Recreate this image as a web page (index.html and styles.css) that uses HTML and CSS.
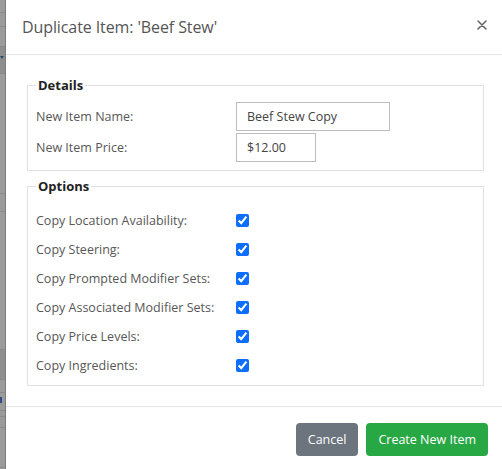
FILE: index.html
```html
<!DOCTYPE html>
<html lang="en">
<head>
<meta charset="utf-8">
<title>Duplicate Item</title>
<link rel="stylesheet" href="styles.css">
</head>
<body>
  <!-- dimmed page behind the dialog -->
  <div class="page">
    <div class="page-row h13"></div>
    <div class="page-row h14"></div>
    <div class="page-row h20"></div>
    <div class="page-row h27 dark"><span class="caret"></span></div>
    <div class="page-row h120"></div>
    <div class="page-row h18"></div>
    <div class="page-row h138"></div>
    <div class="page-row h30 dark"></div>
    <div class="page-row h13"></div>
    <div class="page-row h18"><span class="mark"></span></div>
    <div class="page-row h6"></div>
    <div class="page-row h11"></div>
    <div class="page-row h40"></div>
  </div>

  <div class="modal">
    <div class="modal-header">
      <h5 class="modal-title">Duplicate Item: 'Beef Stew'</h5>
      <button class="close" type="button" aria-label="Close">
        <svg width="10" height="10" viewBox="0 0 10 10"><path d="M1 1L9 9M9 1L1 9" stroke="#666" stroke-width="1.6" stroke-linecap="round"/></svg>
      </button>
    </div>

    <div class="modal-body">
      <fieldset class="group">
        <legend>Details</legend>
        <div class="grid details">
          <label class="lbl">New Item Name:</label>
          <input class="field name" type="text" value="Beef Stew Copy">
          <label class="lbl">New Item Price:</label>
          <input class="field price" type="text" value="$12.00">
        </div>
      </fieldset>

      <fieldset class="group options">
        <legend>Options</legend>
        <div class="grid checks">
          <label class="lbl">Copy Location Availability:</label>
          <input class="check" type="checkbox" checked>
          <label class="lbl">Copy Steering:</label>
          <input class="check" type="checkbox" checked>
          <label class="lbl">Copy Prompted Modifier Sets:</label>
          <input class="check" type="checkbox" checked>
          <label class="lbl">Copy Associated Modifier Sets:</label>
          <input class="check" type="checkbox" checked>
          <label class="lbl">Copy Price Levels:</label>
          <input class="check" type="checkbox" checked>
          <label class="lbl">Copy Ingredients:</label>
          <input class="check" type="checkbox" checked>
        </div>
      </fieldset>
    </div>

    <div class="modal-footer">
      <button class="btn btn-secondary" type="button">Cancel</button>
      <button class="btn btn-success" type="button">Create New Item</button>
    </div>
  </div>
</body>
</html>
```

FILE: styles.css
```css
* { box-sizing: border-box; }

html, body {
  margin: 0;
  height: 100%;
}

body {
  position: relative;
  overflow: hidden;
  background: #9b9b9b;
  font-family: "Open Sans", "Noto Sans", sans-serif;
  color: #555;
}

/* background table rows, dimmed by the backdrop */
.page {
  display: flex;
  flex-direction: column;
  width: 5px;
}
.page-row {
  position: relative;
  flex-shrink: 0;
  border-bottom: 1px solid #8a8a8a;
}
.page-row.dark { background: #8e8e8e; }
.h6 { height: 6px; }
.h11 { height: 11px; }
.h13 { height: 13px; }
.h14 { height: 14px; }
.h18 { height: 18px; }
.h20 { height: 20px; }
.h27 { height: 27px; }
.h30 { height: 30px; }
.h40 { height: 40px; }
.h120 { height: 120px; }
.h138 { height: 138px; }
.caret {
  position: absolute;
  left: 0;
  top: 9px;
  border-left: 2px solid transparent;
  border-right: 2px solid transparent;
  border-top: 3px solid #2d4a6a;
}
.mark {
  position: absolute;
  left: 0;
  top: 4px;
  width: 2px;
  height: 6px;
  background: #2c4f86;
}

/* dialog */
.modal {
  position: absolute;
  left: 5px;
  top: 0;
  width: 500px;
  height: 480px;
  background: #fff;
  border-left: 1px solid #7d7d7d;
  display: flex;
  flex-direction: column;
}
.modal > * { flex-shrink: 0; }

.modal-header {
  height: 55px;
  border-bottom: 1px solid #e3e5e8;
  display: flex;
  align-items: center;
  justify-content: space-between;
  padding: 0 17px 0 16px;
}

.modal-title {
  margin: 0;
  font-size: 16px;
  font-weight: 500;
  color: #555;
  letter-spacing: -0.1px;
}

.close {
  border: 0;
  background: none;
  padding: 0;
  width: 10px;
  height: 10px;
  display: flex;
  margin-top: -4px;
  margin-right: 1px;
}

.modal-body {
  padding: 22px 21px 20px;
  display: flex;
  flex-direction: column;
  gap: 7px;
}

.group {
  margin: 0;
  border: 1px solid #e0e2e7;
  padding: 9px 8px 8px;
}
.group.options { padding-bottom: 11px; }

.group legend {
  padding: 0 2px;
  font-size: 13px;
  font-weight: 700;
  color: #222;
  line-height: 16px;
}

.grid {
  display: grid;
  grid-template-columns: 200px auto;
  align-items: center;
  justify-items: start;
}
.details { row-gap: 2px; }
.checks { row-gap: 12px; padding-top: 9px; }

.lbl {
  font-size: 12.5px;
  line-height: 17px;
  color: #575757;
}

.field {
  height: 29px;
  border: 1px solid #bdbdbd;
  border-radius: 0;
  padding: 0 10px;
  font: inherit;
  font-size: 12.5px;
  color: #444;
  outline: none;
}
.field.name { width: 154px; }
.field.price { width: 80px; }

.check {
  margin: 0;
  width: 13px;
  height: 13px;
  accent-color: #0d6efd;
}

.modal-footer {
  border-top: 1px solid #e3e5e8;
  display: flex;
  justify-content: flex-end;
  gap: 8px;
  padding: 16px 17px 16px 16px;
}

.btn {
  height: 33px;
  border: 0;
  border-radius: 4px;
  padding: 0 12px;
  font: inherit;
  font-size: 12.5px;
  color: #fff;
}
.btn-secondary { background: #6c757d; }
.btn-success { background: #28a745; }
```
